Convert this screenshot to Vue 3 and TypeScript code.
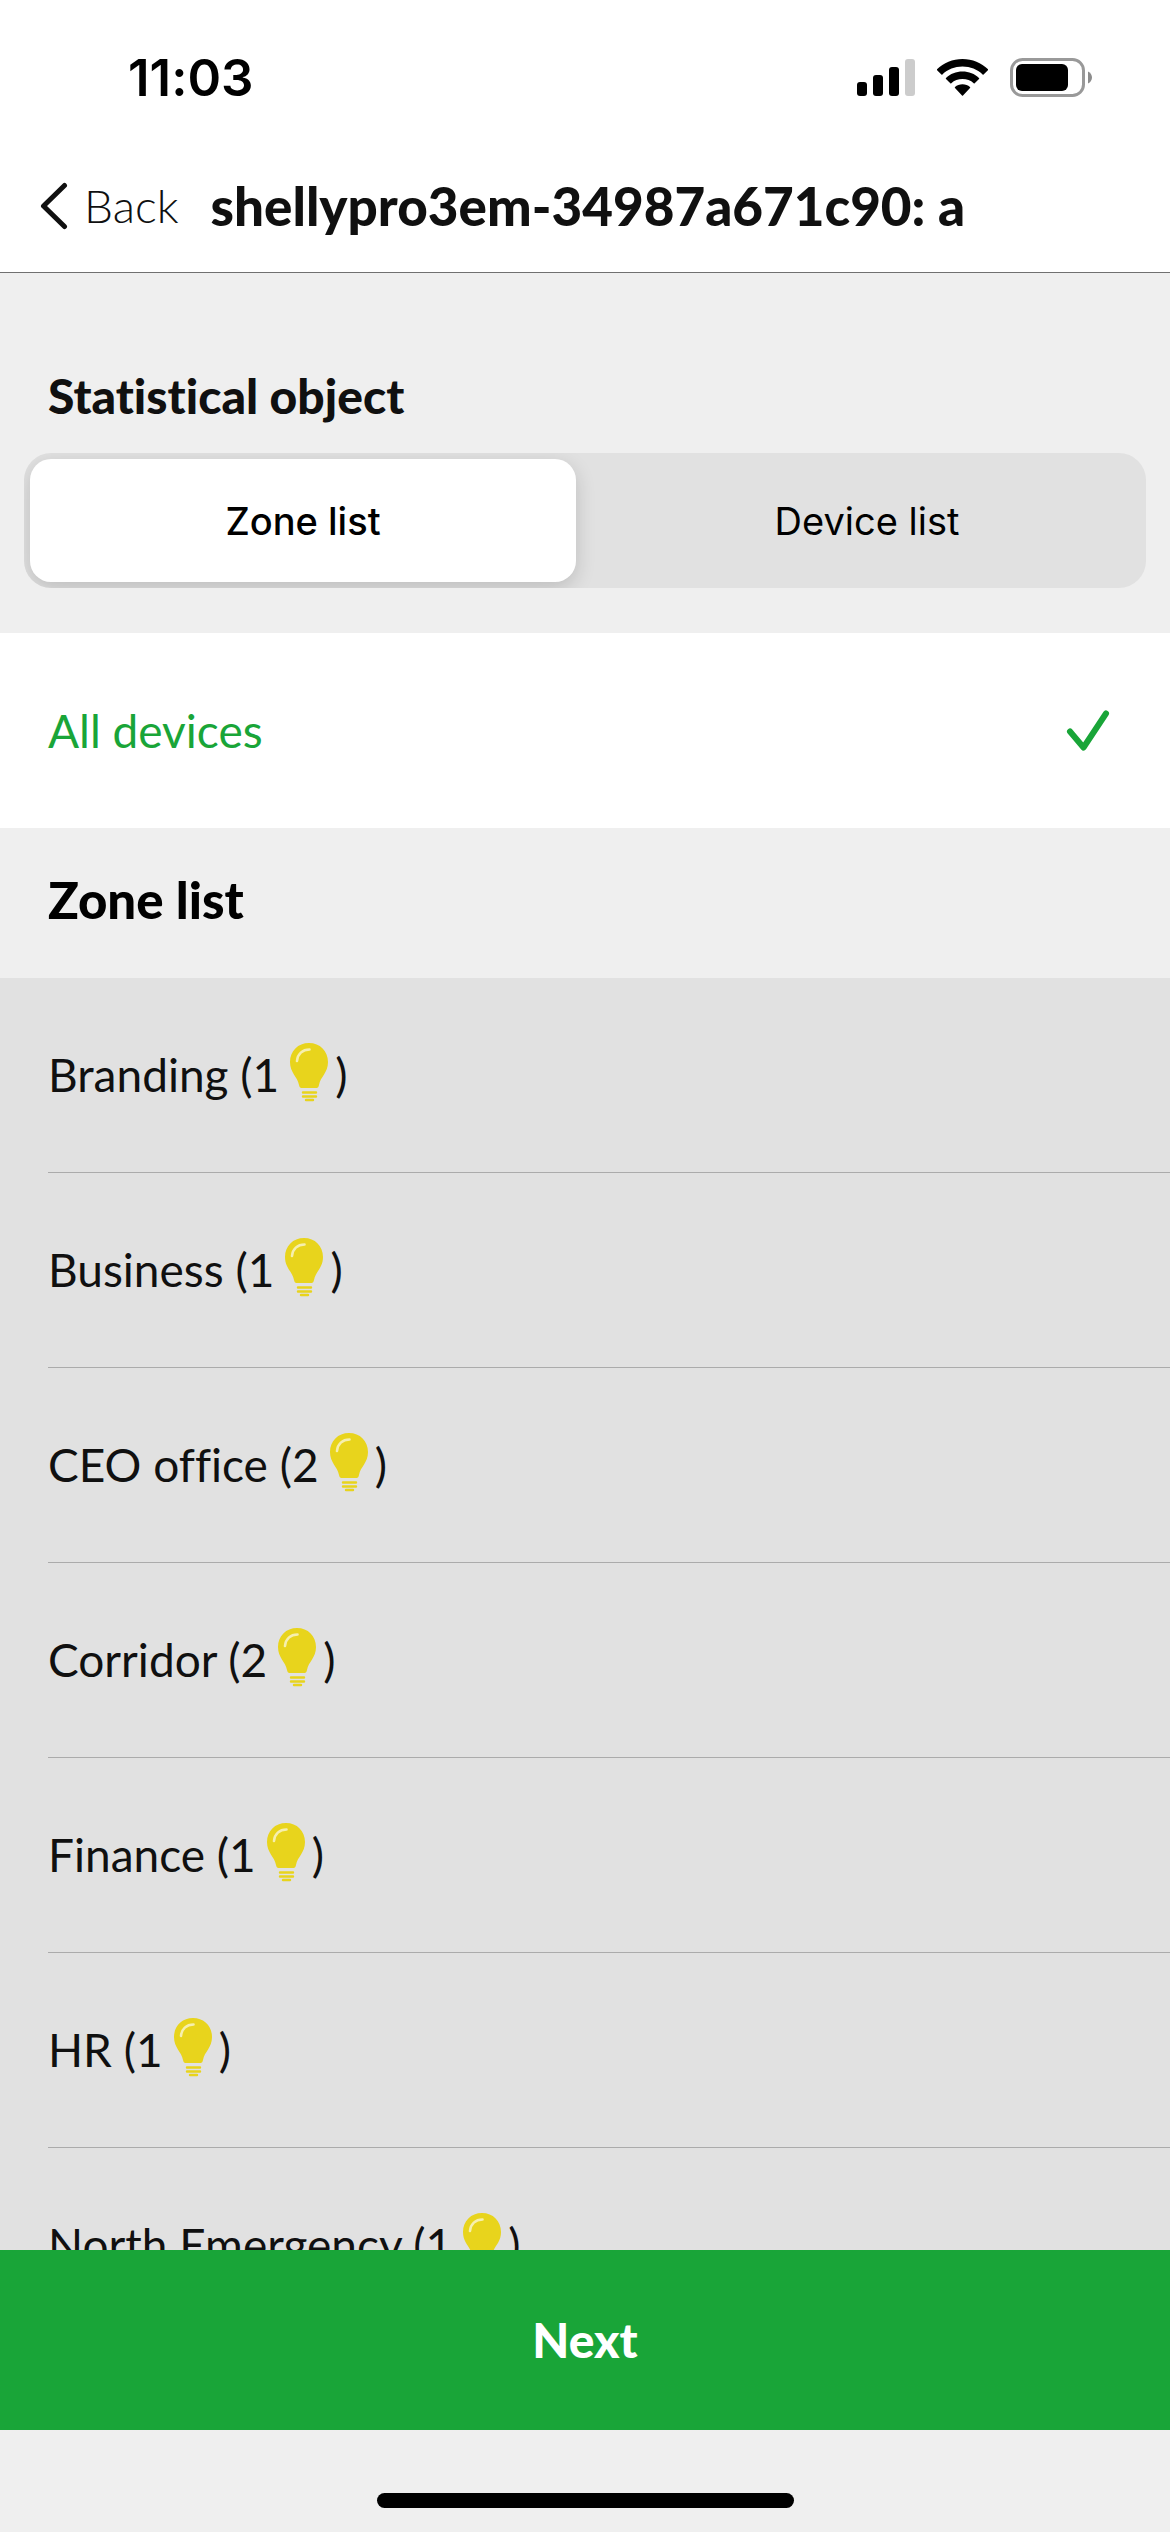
<script setup lang="ts">
import { ref } from 'vue'

interface Zone {
  name: string
  count: number
}

const tabs = ['Zone list', 'Device list']
const activeTab = ref(tabs[0])
const selected = ref('all')

const zones: Zone[] = [
  { name: 'Branding', count: 1 },
  { name: 'Business', count: 1 },
  { name: 'CEO office', count: 2 },
  { name: 'Corridor', count: 2 },
  { name: 'Finance', count: 1 },
  { name: 'HR', count: 1 },
  { name: 'North Emergency', count: 1 },
]
</script>

<template>
  <div class="screen">
    <div class="status">
      <span class="time">11:03</span>
      <div class="indicators">
        <svg width="58" height="38" viewBox="0 0 58 38" aria-hidden="true">
          <rect x="0" y="23" width="10" height="14" rx="3" />
          <rect x="16" y="16" width="10" height="21" rx="3" />
          <rect x="32" y="8" width="10" height="29" rx="3" />
          <rect x="48" y="0" width="10" height="37" rx="3" fill="#cccccc" />
        </svg>
        <svg width="51" height="38" viewBox="0 0 51 38" aria-hidden="true">
          <path d="M25.500 0C35.400 0 44.400 3.900 51 10.200Q51.400 10.700 50.900 11.200L46.600 15.400Q46.100 15.900 45.600 15.400C40.300 10.500 33.300 7.600 25.500 7.600S10.700 10.500 5.400 15.400Q4.900 15.900 4.400 15.400L.1 11.200Q-.4 10.700 0 10.200C6.600 3.900 15.600 0 25.500 0Z" />
          <path d="M25.500 12.600C31.900 12.600 37.700 15 42 19Q42.500 19.500 42 20L37.700 24.200Q37.200 24.700 36.700 24.200C33.700 21.600 29.800 20.100 25.500 20.100S17.300 21.600 14.300 24.200Q13.800 24.700 13.300 24.200L9 20Q8.500 19.500 9 19C13.300 15 19.100 12.600 25.500 12.600Z" />
          <path d="M25.500 25.200C28.400 25.200 31 26.200 33 27.900Q33.500 28.400 33 28.900L26 36.600Q25.500 37.100 25 36.600L18 28.900Q17.500 28.400 18 27.900C20 26.200 22.600 25.200 25.500 25.200Z" />
        </svg>
        <svg width="82" height="40" viewBox="0 0 82 40" aria-hidden="true">
          <rect x="1.500" y="1.500" width="72" height="36" rx="11" fill="none" stroke="#999999" stroke-width="3" />
          <rect x="6" y="6" width="52" height="27" rx="6" />
          <path d="M78 13.500C80.500 14.500 82 17 82 19.500S80.500 24.500 78 25.500Z" fill="#8c8c8c" />
        </svg>
      </div>
    </div>

    <header class="nav">
      <button class="back" type="button">
        <svg width="28" height="48" viewBox="0 0 28 48" aria-hidden="true">
          <path d="M24.500 3.500L3.500 24L24.500 44.500" fill="none" stroke="#101010" stroke-width="5" stroke-linecap="round" stroke-linejoin="round" />
        </svg>
        <span>Back</span>
      </button>
      <h1>shellypro3em-34987a671c90: a</h1>
    </header>

    <main class="content">
      <section class="object">
        <h2>Statistical object</h2>
        <div class="segments" role="tablist" aria-label="Statistical object">
          <button
            v-for="tab in tabs"
            :key="tab"
            type="button"
            role="tab"
            class="segment"
            :class="{ active: tab === activeTab }"
            :aria-selected="tab === activeTab"
            @click="activeTab = tab"
          >
            {{ tab }}
          </button>
        </div>
      </section>

      <button class="all" type="button" @click="selected = 'all'">
        <span>All devices</span>
        <svg v-if="selected === 'all'" width="44" height="44" viewBox="0 0 44 44" aria-hidden="true">
          <path d="M4 22.500L17.500 38.500L40 4.500" fill="none" stroke="#19a538" stroke-width="6" stroke-linecap="round" stroke-linejoin="round" />
        </svg>
      </button>

      <h2 class="section-title">Zone list</h2>

      <ul class="zones">
        <li v-for="zone in zones" :key="zone.name">
          <button class="zone" type="button">
            <span>{{ zone.name }} ({{ zone.count }}</span>
            <svg class="bulb" width="40" height="64" viewBox="0 0 40 64" aria-hidden="true">
              <path d="M20 0C31 0 39 8 39 19C39 30 31.500 33.500 30 42Q29.500 45 27.500 45H12.500Q10.500 45 10 42C8.500 33.500 1 30 1 19C1 8 9 0 20 0Z" fill="#e8d41c" />
              <path d="M8 18C8.500 11 13.500 6.500 20.500 6.500" fill="none" stroke="#f6efae" stroke-width="2.600" stroke-linecap="round" />
              <path d="M14 49.500H27M14 53.500H27M17 57H24" fill="none" stroke="#e8d41c" stroke-width="2.400" stroke-linecap="round" />
            </svg>
            <span>)</span>
          </button>
        </li>
      </ul>
    </main>

    <footer class="footer">
      <button class="next" type="button">Next</button>
      <div class="home"></div>
    </footer>
  </div>
</template>

<style>
body {
  margin: 0;
  background: #efefef;
}
</style>

<style scoped>
.screen {
  display: flex;
  flex-direction: column;
  height: 100vh;
  overflow: hidden;
  background: #efefef;
  color: #101010;
  font-family: Lato, "Open Sans", sans-serif;
  font-size: 46px;
  font-variant-ligatures: none;
  line-height: 60px;
}

button {
  margin: 0;
  padding: 0;
  border: 0;
  background: none;
  color: inherit;
  font: inherit;
  text-align: left;
  cursor: pointer;
}

h1,
h2 {
  margin: 0;
}

svg {
  display: block;
  flex: none;
}

.status {
  display: flex;
  flex: none;
  align-items: center;
  justify-content: space-between;
  height: 156px;
  padding: 0 78px 0 128px;
  background: #fff;
  color: #000;
}

.time {
  font-family: Inter, sans-serif;
  font-size: 51px;
  font-weight: 600;
}

.indicators {
  display: flex;
  align-items: center;
  gap: 22px;
}

.nav {
  display: flex;
  flex: none;
  align-items: center;
  gap: 32px;
  height: 100px;
  padding: 0 40px 16px;
  border-bottom: 1px solid #707070;
  background: #fff;
}

.back {
  display: flex;
  align-items: center;
  gap: 16px;
  font-weight: 300;
}

h1 {
  font-size: 53px;
  font-weight: 900;
  line-height: 72px;
  white-space: nowrap;
}

.content {
  flex: 1;
  min-height: 0;
  overflow: hidden;
}

.object {
  padding: 93px 24px 45px;
}

.object h2 {
  padding: 0 24px 27px;
  font-size: 48px;
  font-weight: 900;
}

.segments {
  display: flex;
  gap: 18px;
  padding: 6px;
  border-radius: 27px;
  background: #e1e1e1;
  overflow: hidden;
}

.segment {
  flex: 1;
  height: 123px;
  border-radius: 21px;
  color: #000;
  font-family: Inter, sans-serif;
  font-size: 38px;
  font-weight: 400;
  text-align: center;
}

.segment.active {
  background: #fff;
  box-shadow: 0 6px 20px rgba(0, 0, 0, 0.16);
  font-weight: 500;
}

.all {
  display: flex;
  align-items: center;
  justify-content: space-between;
  width: 100%;
  height: 195px;
  padding: 0 60px 0 48px;
  background: #fff;
  color: #19a538;
}

.section-title {
  padding: 42px 48px 48px;
  color: #000;
  font-size: 51px;
  font-weight: 900;
}

.zones {
  margin: 0;
  padding: 0 0 0 48px;
  background: #e1e1e1;
  list-style: none;
}

.zone {
  display: flex;
  align-items: center;
  width: 100%;
  height: 195px;
  border-bottom: 1px solid #ababab;
}

.bulb {
  margin: 0 6px 0 10px;
}

.footer {
  display: flex;
  flex: none;
  flex-direction: column;
  align-items: center;
  padding-bottom: 24px;
}

.next {
  width: 100%;
  height: 180px;
  background: #19a538;
  color: #fff;
  font-size: 48px;
  font-weight: 900;
  text-align: center;
}

.home {
  width: 417px;
  height: 15px;
  margin-top: 63px;
  border-radius: 8px;
  background: #000;
}
</style>
